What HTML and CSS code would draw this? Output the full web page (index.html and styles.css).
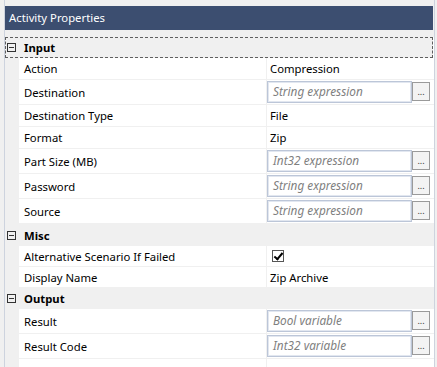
FILE: index.html
```html
<!DOCTYPE html>
<html lang="en">
<head>
    <meta charset="UTF-8">
    <title>Activity Properties</title>
    <link rel="stylesheet" href="styles.css">
</head>
<body>
    <div class="panel">
        <div class="title">Activity Properties</div>
        <div class="grid">
            <div class="group focused"><span class="toggle"></span>Input</div>
            <div class="row"><div class="name">Action</div><div class="value">Compression</div></div>
            <div class="row tall"><div class="name">Destination</div><div class="value"><span class="box">String expression</span><span class="btn">...</span></div></div>
            <div class="row"><div class="name">Destination Type</div><div class="value">File</div></div>
            <div class="row"><div class="name">Format</div><div class="value">Zip</div></div>
            <div class="row tall"><div class="name">Part Size (MB)</div><div class="value"><span class="box">Int32 expression</span><span class="btn">...</span></div></div>
            <div class="row tall"><div class="name">Password</div><div class="value"><span class="box">String expression</span><span class="btn">...</span></div></div>
            <div class="row tall"><div class="name">Source</div><div class="value"><span class="box">String expression</span><span class="btn">...</span></div></div>

            <div class="group"><span class="toggle"></span>Misc</div>
            <div class="row short"><div class="name">Alternative Scenario If Failed</div><div class="value"><span class="check"></span></div></div>
            <div class="row short"><div class="name">Display Name</div><div class="value">Zip Archive</div></div>

            <div class="group short"><span class="toggle"></span>Output</div>
            <div class="row tall"><div class="name">Result</div><div class="value"><span class="box">Bool variable</span><span class="btn">...</span></div></div>
            <div class="row tall"><div class="name">Result Code</div><div class="value"><span class="box">Int32 variable</span><span class="btn">...</span></div></div>
            <div class="row rest"><div class="name"></div><div class="value"></div></div>
        </div>
    </div>
</body>
</html>
```

FILE: styles.css
```css
* {
    margin: 0;
    padding: 0;
    box-sizing: border-box;
}

body {
    background: #f0f0f0;
    font-family: "Noto Sans", "Open Sans", sans-serif;
    font-size: 11.3px;
    color: #000;
    overflow: hidden;
}

.panel {
    margin-left: 4px;
    width: 431px;
    height: 367px;
    border-left: 1px solid #cdd3de;
    border-right: 1px solid #cdd3de;
    padding-top: 6px;
    display: flex;
    flex-direction: column;
}

.title {
    height: 24px;
    line-height: 24px;
    background: #3c4e70;
    color: #fff;
    padding-left: 4px;
    margin-right: 1px;
}

.grid {
    margin-top: 7px;
    flex: 1;
    background: #fff;
    display: flex;
    flex-direction: column;
}

.group {
    height: 22px;
    flex-shrink: 0;
    display: flex;
    align-items: center;
    background: #f0f0f0;
    font-weight: bold;
    padding-left: 2px;
}

.group.short {
    height: 21px;
}

.group.focused {
    height: 21px;
    outline: 1px dashed #5f5f5f;
    outline-offset: -1px;
    margin-right: 1px;
}

.toggle {
    width: 9px;
    height: 9px;
    border: 1px solid #333;
    margin-right: 8px;
    position: relative;
}

.toggle::after {
    content: "";
    position: absolute;
    left: 1px;
    top: 3px;
    width: 5px;
    height: 1px;
    background: #333;
}

.row {
    height: 22px;
    flex-shrink: 0;
    display: flex;
    padding-left: 14px;
    background: #f0f0f0;
}

.row.short {
    height: 21px;
}

.row.tall {
    height: 25px;
}

.row.rest {
    flex: 1;
}

.name {
    width: 248px;
    background: #fff;
    border-bottom: 1px solid #f0f0f0;
    border-right: 1px solid #f0f0f0;
    padding-left: 5px;
    display: flex;
    align-items: center;
}

.value {
    flex: 1;
    background: #fff;
    border-bottom: 1px solid #f0f0f0;
    padding-left: 3px;
    display: flex;
    align-items: center;
}

.row.tall .value {
    padding-left: 0;
    align-items: flex-start;
    padding-top: 1px;
}

.row.rest .name,
.row.rest .value {
    border-bottom: 0;
}

.box {
    width: 145px;
    height: 22px;
    border: 1px solid #bcc6d8;
    box-shadow: inset 0 0 0 1px #e2e7f0;
    color: #808080;
    font-style: italic;
    padding-left: 5px;
    line-height: 19px;
    font-size: 11.8px;
}

.btn {
    width: 18px;
    height: 19px;
    margin-top: 1px;
    border: 1px solid #9a9a9a;
    background: #f3f3f3;
    font-size: 9px;
    text-align: center;
    line-height: 17px;
    color: #333;
}

.check {
    width: 12px;
    height: 12px;
    border: 1px solid #555;
    margin-left: 2px;
    position: relative;
}

.check::after {
    content: "";
    position: absolute;
    left: 3px;
    top: 0;
    width: 3px;
    height: 7px;
    border-right: 2px solid #000;
    border-bottom: 2px solid #000;
    transform: rotate(40deg);
}
```
